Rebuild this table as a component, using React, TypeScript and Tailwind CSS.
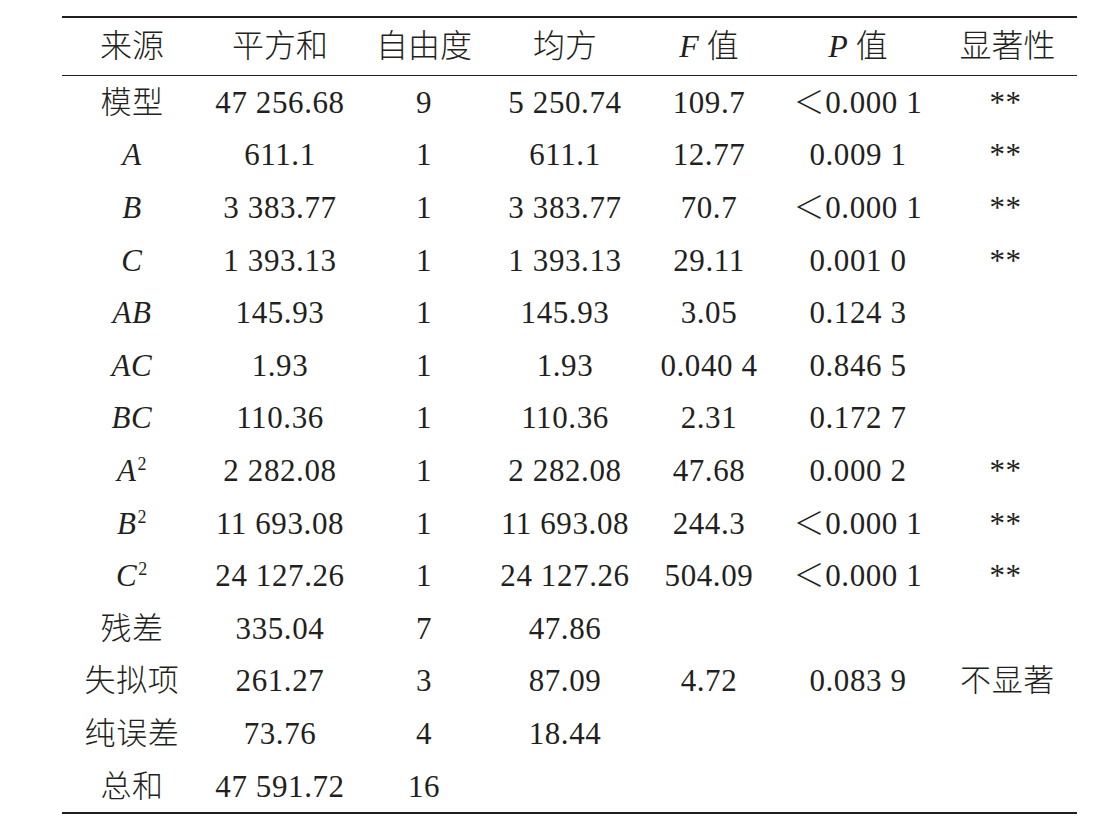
import React from 'react';

type Cell = React.ReactNode;

const It = ({ children }: { children: React.ReactNode }) => <span className="italic">{children}</span>;

const Sq = ({ v }: { v: string }) => (
  <span>
    <It>{v}</It>
    <sup className="text-[18px] not-italic -top-[11px] ml-[1px]">2</sup>
  </span>
);

const header: Cell[] = [
  '来源',
  '平方和',
  '自由度',
  '均方',
  <span key="f"><It>F</It> 值</span>,
  <span key="p"><It>P</It> 值</span>,
  '显著性',
];

const rows: Cell[][] = [
  ['模型', '47 256.68', '9', '5 250.74', '109.7', '＜0.000 1', '**'],
  [<It key="a">A</It>, '611.1', '1', '611.1', '12.77', '0.009 1', '**'],
  [<It key="b">B</It>, '3 383.77', '1', '3 383.77', '70.7', '＜0.000 1', '**'],
  [<It key="c">C</It>, '1 393.13', '1', '1 393.13', '29.11', '0.001 0', '**'],
  [<It key="ab">AB</It>, '145.93', '1', '145.93', '3.05', '0.124 3', ''],
  [<It key="ac">AC</It>, '1.93', '1', '1.93', '0.040 4', '0.846 5', ''],
  [<It key="bc">BC</It>, '110.36', '1', '110.36', '2.31', '0.172 7', ''],
  [<Sq key="a2" v="A" />, '2 282.08', '1', '2 282.08', '47.68', '0.000 2', '**'],
  [<Sq key="b2" v="B" />, '11 693.08', '1', '11 693.08', '244.3', '＜0.000 1', '**'],
  [<Sq key="c2" v="C" />, '24 127.26', '1', '24 127.26', '504.09', '＜0.000 1', '**'],
  ['残差', '335.04', '7', '47.86', '', '', ''],
  ['失拟项', '261.27', '3', '87.09', '4.72', '0.083 9', '不显著'],
  ['纯误差', '73.76', '4', '18.44', '', '', ''],
  ['总和', '47 591.72', '16', '', '', '', ''],
];

const cols = 'grid grid-cols-[140px_156px_132px_150px_138px_160px_139px]';

export default function App() {
  return (
    <div
      className="w-[1105px] h-[828px] bg-white pl-[62px] pt-[16px] text-[#231f20] text-[31px] leading-none font-light"
      style={{ fontFamily: '"Liberation Serif", "Noto Sans CJK SC", serif' }}
    >
      <div className="w-[1015px] border-t-2 border-b-[2.5px] border-[#231f20]">
        <div className={`${cols} h-[58px] border-b border-[#231f20]`}>
          {header.map((h, i) => (
            <div key={i} className="flex items-center justify-center text-[32px] pb-[2px] whitespace-pre">
              {h}
            </div>
          ))}
        </div>
        {rows.map((r, ri) => (
          <div key={ri} className={`${cols} h-[52.6px]`}>
            {r.map((c, ci) => (
              <div key={ci} className={`flex items-center justify-center tracking-[0.6px] whitespace-pre ${c === '**' ? 'pr-[4px]' : ''}`}>
                {c}
              </div>
            ))}
          </div>
        ))}
      </div>
    </div>
  );
}
